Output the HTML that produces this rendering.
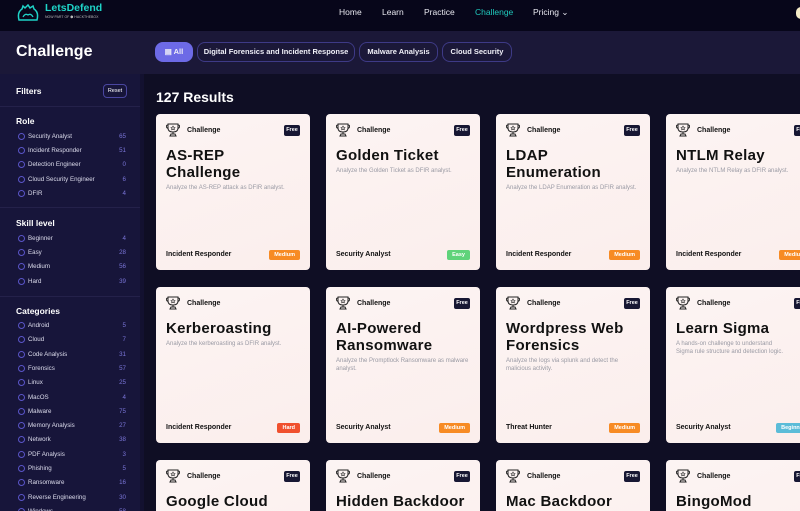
<!DOCTYPE html>
<html style="width:800px;height:511px;overflow:hidden"><head><meta charset="utf-8"><style>
*{margin:0;padding:0;box-sizing:border-box}
body{width:800px;height:511px;overflow:hidden;background:#0f0e24;font-family:"Liberation Sans",sans-serif;position:relative;color:#fff}
.nav{position:absolute;left:0;top:0;width:800px;height:31px;background:#07061a}
.nav a{position:absolute;top:7px;font-size:8.5px;color:#e8e8f0}
.hdr{position:absolute;left:0;top:31px;width:800px;height:43px;background:#1b1838}
.hdr h1{position:absolute;left:16px;top:12px;font-size:16px;font-weight:bold}
.pill{position:absolute;top:11px;height:20px;border:1px solid #3e3a86;border-radius:8px;font-size:7.5px;font-weight:bold;line-height:18px;text-align:center;color:#f0f0f8}
.side{position:absolute;left:0;top:74px;width:140px;height:437px;background:#17153a;overflow:hidden}
.side .sec{position:absolute;left:16px;font-size:8.5px;font-weight:bold}
.it{position:absolute;left:18px;width:108px;height:10px;font-size:6.2px;color:#dcdcec}
.it i{position:absolute;left:0;top:1px;width:7px;height:7px;border:1.2px solid #5a55c8;border-radius:50%}
.it span{position:absolute;left:10px;top:1px}
.it b{position:absolute;right:0;top:1px;font-weight:normal;color:#7a75d8}
.hr{position:absolute;left:0;width:140px;height:1px;background:#24214a}
.main{position:absolute;left:144px;top:74px;width:656px;height:437px;overflow:hidden}
.card{position:absolute;width:154px;height:156px;border-radius:4px;background:linear-gradient(160deg,#fcf4f3,#fbeeec);color:#111}
.card .ic{position:absolute;left:10px;top:9px}
.card .lb{position:absolute;left:31px;top:13px;font-size:7px;font-weight:bold}
.card .fr{position:absolute;left:128px;top:11px;width:16px;height:11px;background:#171733;border-radius:2px;color:#fff;font-size:5.5px;font-weight:bold;text-align:center;line-height:11px}
.card h3{position:absolute;left:10px;top:33px;white-space:nowrap;font-size:15px;line-height:17px;font-weight:bold;letter-spacing:0.3px}
.card p{position:absolute;left:10px;width:135px;font-size:6px;line-height:8px;color:#9a9aa4}
.card .rl{position:absolute;left:10px;top:137px;font-size:7px;font-weight:bold}
.card .bd{position:absolute;right:10px;top:136px;height:10px;padding:0 5px;border-radius:2px;color:#fff;font-size:5.5px;font-weight:bold;line-height:10px}
</style></head><body>
<div class="nav">
<svg style="position:absolute;left:16px;top:4px" width="24" height="18" viewBox="0 0 24 18"><path d="M3 16 Q1 8 6 5 L7 2 L9 4 L12 1 L14 4 L17 2 L18 5 Q23 8 21 16 Z" fill="none" stroke="#1fd4c8" stroke-width="1.5"/><path d="M7 13 Q9 9 12 11 Q15 9 17 13" fill="none" stroke="#1fd4c8" stroke-width="1.3"/></svg>
<div style="position:absolute;left:45px;top:2px;font-size:10.5px;font-weight:bold;color:#1fd4c8">LetsDefend</div>
<div style="position:absolute;left:45px;top:15px;font-size:3.5px;color:#bbb">NOW PART OF ⬢ HACKTHEBOX</div>
<a style="left:339px">Home</a><a style="left:382px">Learn</a><a style="left:424px">Practice</a><a style="left:475px;color:#1fc8bc">Challenge</a><a style="left:533px">Pricing ⌄</a>
<div style="position:absolute;left:796px;top:7px;width:10px;height:12px;border-radius:5px;background:#f5ecc8"></div>
</div>
<div class="hdr"><h1>Challenge</h1>
<div class="pill" style="left:155px;width:38px;background:#6d6ae6;border-color:#6d6ae6">▤ All</div>
<div class="pill" style="left:197px;width:158px">Digital Forensics and Incident Response</div>
<div class="pill" style="left:359px;width:79px">Malware Analysis</div>
<div class="pill" style="left:442px;width:70px">Cloud Security</div>
</div>
<div class="side">
<div class="sec" style="top:12px">Filters</div>
<div style="position:absolute;left:103px;top:10px;width:24px;height:14px;border:1px solid #4a46a0;border-radius:4px;font-size:5.5px;text-align:center;line-height:12px">Reset</div>
<div class="hr" style="top:32px"></div>
<div class="sec" style="top:42px">Role</div>
<div class="it" style="top:58px"><i></i><span>Security Analyst</span><b>65</b></div>
<div class="it" style="top:72px"><i></i><span>Incident Responder</span><b>51</b></div>
<div class="it" style="top:86px"><i></i><span>Detection Engineer</span><b>0</b></div>
<div class="it" style="top:101px"><i></i><span>Cloud Security Engineer</span><b>6</b></div>
<div class="it" style="top:115px"><i></i><span>DFIR</span><b>4</b></div>
<div class="hr" style="top:133px"></div>
<div class="sec" style="top:144px">Skill level</div>
<div class="it" style="top:160px"><i></i><span>Beginner</span><b>4</b></div>
<div class="it" style="top:174px"><i></i><span>Easy</span><b>28</b></div>
<div class="it" style="top:188px"><i></i><span>Medium</span><b>56</b></div>
<div class="it" style="top:203px"><i></i><span>Hard</span><b>39</b></div>
<div class="hr" style="top:222px"></div>
<div class="sec" style="top:232px">Categories</div>
<div class="it" style="top:247px"><i></i><span>Android</span><b>5</b></div>
<div class="it" style="top:261px"><i></i><span>Cloud</span><b>7</b></div>
<div class="it" style="top:276px"><i></i><span>Code Analysis</span><b>31</b></div>
<div class="it" style="top:290px"><i></i><span>Forensics</span><b>57</b></div>
<div class="it" style="top:304px"><i></i><span>Linux</span><b>25</b></div>
<div class="it" style="top:319px"><i></i><span>MacOS</span><b>4</b></div>
<div class="it" style="top:333px"><i></i><span>Malware</span><b>75</b></div>
<div class="it" style="top:347px"><i></i><span>Memory Analysis</span><b>27</b></div>
<div class="it" style="top:361px"><i></i><span>Network</span><b>38</b></div>
<div class="it" style="top:376px"><i></i><span>PDF Analysis</span><b>3</b></div>
<div class="it" style="top:390px"><i></i><span>Phishing</span><b>5</b></div>
<div class="it" style="top:404px"><i></i><span>Ransomware</span><b>16</b></div>
<div class="it" style="top:419px"><i></i><span>Reverse Engineering</span><b>30</b></div>
<div class="it" style="top:433px"><i></i><span>Windows</span><b>58</b></div>
</div>
<div style="position:absolute;left:140px;top:74px;width:4px;height:437px;background:#131130"></div>

<svg width="0" height="0" style="position:absolute"><defs><g id="cup"><path d="M2 1 H12 V5 Q12 9 7 9 Q2 9 2 5 Z M2 2 Q0 2 0.5 4 Q1 5.5 2.5 5.5 M12 2 Q14 2 13.5 4 Q13 5.5 11.5 5.5 M7 9 V11 M4 13 H10 L9 11 H5 Z" fill="none" stroke="#222" stroke-width="1"/><path d="M7 3 L7.7 4.4 L9 4.6 L8 5.5 L8.3 6.8 L7 6.1 L5.7 6.8 L6 5.5 L5 4.6 L6.3 4.4 Z" fill="none" stroke="#222" stroke-width="0.6"/></g></defs></svg>

<div class="main">
<div style="position:absolute;left:12px;top:15px;font-size:14px;font-weight:bold">127 Results</div>
<div class="card" style="left:12px;top:40px"><svg class="ic" width="14" height="14"><use href="#cup"/></svg><div class="lb">Challenge</div><div class="fr">Free</div><h3>AS-REP<br>Challenge</h3><p style="top:70px">Analyze the AS-REP attack as DFIR analyst.</p><div class="rl">Incident Responder</div><div class="bd" style="background:#f78b24">Medium</div></div>
<div class="card" style="left:182px;top:40px"><svg class="ic" width="14" height="14"><use href="#cup"/></svg><div class="lb">Challenge</div><div class="fr">Free</div><h3>Golden Ticket</h3><p style="top:53px">Analyze the Golden Ticket as DFIR analyst.</p><div class="rl">Security Analyst</div><div class="bd" style="background:#5fd37a">Easy</div></div>
<div class="card" style="left:352px;top:40px"><svg class="ic" width="14" height="14"><use href="#cup"/></svg><div class="lb">Challenge</div><div class="fr">Free</div><h3>LDAP<br>Enumeration</h3><p style="top:70px">Analyze the LDAP Enumeration as DFIR analyst.</p><div class="rl">Incident Responder</div><div class="bd" style="background:#f78b24">Medium</div></div>
<div class="card" style="left:522px;top:40px"><svg class="ic" width="14" height="14"><use href="#cup"/></svg><div class="lb">Challenge</div><div class="fr">Free</div><h3>NTLM Relay</h3><p style="top:53px;width:200px">Analyze the NTLM Relay as DFIR analyst.</p><div class="rl">Incident Responder</div><div class="bd" style="background:#f78b24">Medium</div></div>

<div class="card" style="left:12px;top:213px"><svg class="ic" width="14" height="14"><use href="#cup"/></svg><div class="lb">Challenge</div><h3>Kerberoasting</h3><p style="top:53px">Analyze the kerberoasting as DFIR analyst.</p><div class="rl">Incident Responder</div><div class="bd" style="background:#f0502e">Hard</div></div>
<div class="card" style="left:182px;top:213px"><svg class="ic" width="14" height="14"><use href="#cup"/></svg><div class="lb">Challenge</div><div class="fr">Free</div><h3>AI-Powered<br>Ransomware</h3><p style="top:70px">Analyze the Promptlock Ransomware as malware analyst.</p><div class="rl">Security Analyst</div><div class="bd" style="background:#f78b24">Medium</div></div>
<div class="card" style="left:352px;top:213px"><svg class="ic" width="14" height="14"><use href="#cup"/></svg><div class="lb">Challenge</div><div class="fr">Free</div><h3>Wordpress Web<br>Forensics</h3><p style="top:70px">Analyze the logs via splunk and detect the malicious activity.</p><div class="rl">Threat Hunter</div><div class="bd" style="background:#f78b24">Medium</div></div>
<div class="card" style="left:522px;top:213px"><svg class="ic" width="14" height="14"><use href="#cup"/></svg><div class="lb">Challenge</div><div class="fr">Free</div><h3>Learn Sigma</h3><p style="top:53px;width:200px">A hands-on challenge to understand<br>Sigma rule structure and detection logic.</p><div class="rl">Security Analyst</div><div class="bd" style="background:#5bbcd8">Beginner</div></div>

<div class="card" style="left:12px;top:386px"><svg class="ic" width="14" height="14"><use href="#cup"/></svg><div class="lb">Challenge</div><div class="fr">Free</div><h3>Google Cloud</h3></div>
<div class="card" style="left:182px;top:386px"><svg class="ic" width="14" height="14"><use href="#cup"/></svg><div class="lb">Challenge</div><div class="fr">Free</div><h3>Hidden Backdoor</h3></div>
<div class="card" style="left:352px;top:386px"><svg class="ic" width="14" height="14"><use href="#cup"/></svg><div class="lb">Challenge</div><div class="fr">Free</div><h3>Mac Backdoor</h3></div>
<div class="card" style="left:522px;top:386px"><svg class="ic" width="14" height="14"><use href="#cup"/></svg><div class="lb">Challenge</div><div class="fr">Free</div><h3>BingoMod</h3></div>
</div>
</body></html>
